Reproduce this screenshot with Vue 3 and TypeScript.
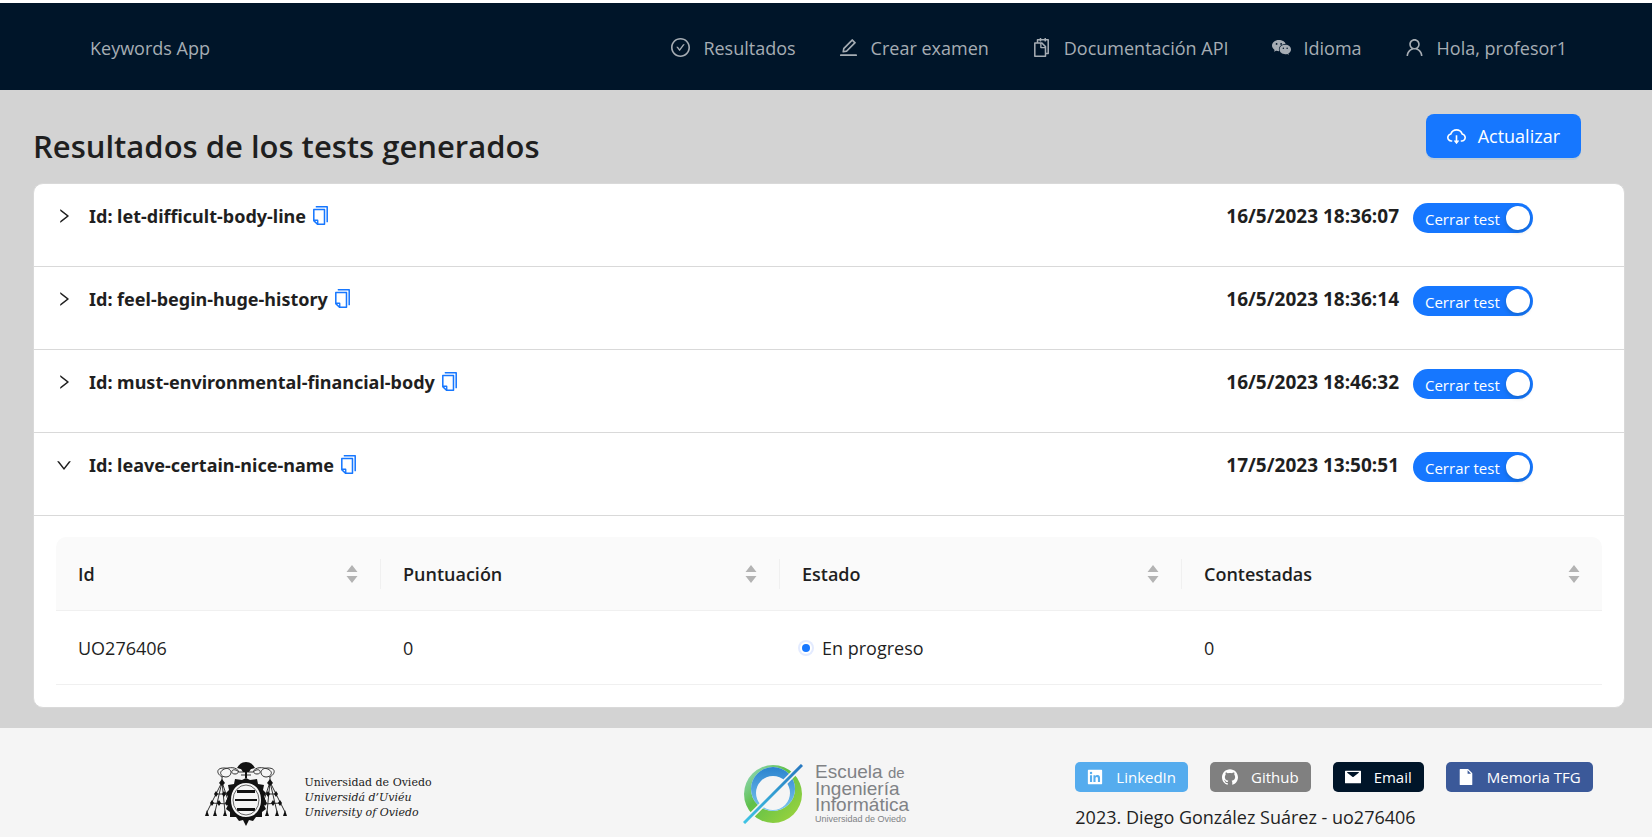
<script setup lang="ts">
import { computed, ref } from 'vue'

interface NavItem {
  label: string
  icon: string
}

interface Answer {
  id: string
  score: number
  state: string
  answered: number
}

interface Test {
  id: string
  date: string
  open: boolean
  active: boolean
}

type Key = keyof Answer

const icons: Record<string, string> = {
  check:
    'M699 353h-46.9c-10.2 0-19.9 4.9-25.9 13.3L469 584.3l-71.2-98.8c-6-8.3-15.6-13.3-25.9-13.3H325c-6.5 0-10.3 7.4-6.5 12.7l124.6 172.8a31.8 31.8 0 0051.7 0l210.6-292c3.9-5.3.1-12.7-6.4-12.7zM512 64C264.6 64 64 264.6 64 512s200.6 448 448 448 448-200.6 448-448S759.4 64 512 64zm0 820c-205.4 0-372-166.6-372-372s166.6-372 372-372 372 166.6 372 372-166.6 372-372 372z',
  edit:
    'M257.7 752c2 0 4-.2 6-.5L431.9 722c2-.4 3.9-1.3 5.3-2.8l423.9-423.9a9.96 9.96 0 000-14.1L694.9 114.9c-1.9-1.9-4.4-2.9-7.1-2.9s-5.2 1-7.1 2.9L256.8 538.8c-1.5 1.5-2.4 3.3-2.8 5.3l-29.5 168.2a33.5 33.5 0 009.4 29.8c6.6 6.4 14.9 9.9 23.8 9.9zm67.4-174.4L687.8 215l73.3 73.3-362.7 362.6-88.9 15.7 15.6-89zM880 836H144c-17.7 0-32 14.3-32 32v36c0 4.4 3.6 8 8 8h784c4.4 0 8-3.6 8-8v-36c0-17.7-14.3-32-32-32z',
  snippets:
    'M832 112H724V72c0-4.4-3.6-8-8-8h-56c-4.4 0-8 3.6-8 8v40H500V72c0-4.4-3.6-8-8-8h-56c-4.4 0-8 3.6-8 8v40H320c-17.7 0-32 14.3-32 32v120h-96c-17.7 0-32 14.3-32 32v632c0 17.7 14.3 32 32 32h512c17.7 0 32-14.3 32-32v-96h96c17.7 0 32-14.3 32-32V144c0-17.7-14.3-32-32-32zM664 888H232V336h218v174c0 22.1 17.9 40 40 40h174v338zm0-402H514V336h.2L664 485.8v.2zm128 274h-56V456L544 264H360v-80h68v32c0 4.4 3.6 8 8 8h56c4.4 0 8-3.6 8-8v-32h152v32c0 4.4 3.6 8 8 8h56c4.4 0 8-3.6 8-8v-32h68v576z',
  chat:
    'M385 160C206 160 64 278 64 423c0 79 43 150 110 198l12 9-28 84 98-50 24 6c33 9 69 14 105 14h17c-8-25-12-52-12-80 0-142 135-255 302-255h14C680 236 547 160 385 160zM280 302a42 42 0 110 84 42 42 0 010-84zM494 302a42 42 0 110 84 42 42 0 010-84zM690 385c-150 0-270 98-270 220s120 222 270 222c32 0 62-5 90-12l82 43-24-70c75-38 122-106 122-183 0-122-120-220-270-220zM600 510a36 36 0 110 72 36 36 0 010-72zM778 510a36 36 0 110 72 36 36 0 010-72z',
  user:
    'M858.5 763.6a374 374 0 00-80.6-119.5 375.63 375.63 0 00-119.5-80.6c-.4-.2-.8-.3-1.2-.5C719.5 518 760 444.7 760 362c0-137-111-248-248-248S264 225 264 362c0 82.7 40.5 156 102.8 201.1-.4.2-.8.3-1.2.5-44.8 18.9-85 46-119.5 80.6a375.63 375.63 0 00-80.6 119.5A371.7 371.7 0 00136 901.8a8 8 0 008 8.2h60c4.4 0 7.9-3.5 8-7.8 2-77.2 33-149.5 87.8-204.3 56.7-56.7 132-87.9 212.2-87.9s155.5 31.2 212.2 87.9C779 752.7 810 825 812 902.2c.1 4.4 3.6 7.8 8 7.8h60a8 8 0 008-8.2c-1-47.8-10.9-94.3-29.5-138.2zM512 534c-45.9 0-89.1-17.9-121.6-50.4S340 407.9 340 362c0-45.9 17.9-89.1 50.4-121.6S466.1 190 512 190s89.1 17.9 121.6 50.4S684 316.1 684 362c0 45.9-17.9 89.1-50.4 121.6S557.9 534 512 534z',
  cloud:
    'M624 706.3h-74.1V464c0-4.4-3.6-8-8-8h-60c-4.4 0-8 3.6-8 8v242.3H400c-6.7 0-10.4 7.7-6.3 12.9l112 141.7a8 8 0 0012.6 0l112-141.7c4.1-5.2.4-12.9-6.3-12.9zM811.4 366.7C765.6 245.9 648.9 160 512.2 160S258.8 245.8 213 366.6C127.3 389.1 64 467.2 64 560c0 110.5 89.5 200 199.9 200H304c4.4 0 8-3.6 8-8v-60c0-4.4-3.6-8-8-8h-40.1c-33.7 0-65.4-13.4-89-37.7-23.5-24.2-36-56.8-34.9-90.6.9-26.4 9.9-51.2 26.2-72.1 16.7-21.3 40.1-36.8 66.1-43.7l37.9-9.9 13.9-36.6c8.6-22.8 20.6-44.1 35.7-63.4a245.6 245.6 0 0152.4-49.9c41.1-28.9 89.5-44.2 140-44.2s98.9 15.3 140 44.2c19.9 14 37.5 30.8 52.4 49.9 15.1 19.3 27.1 40.7 35.7 63.4l13.8 36.5 37.8 10C846.1 454.5 884 503.8 884 560c0 33.1-12.9 64.3-36.3 87.7a123.07 123.07 0 01-87.6 36.3H720c-4.4 0-8 3.6-8 8v60c0 4.4 3.6 8 8 8h40.1C870.5 760 960 670.5 960 560c0-92.7-63.1-170.7-148.6-193.3z',
  right:
    'M765.7 486.8L314.9 134.7A7.97 7.97 0 00302 141v77.3c0 4.9 2.3 9.6 6.1 12.6l360 281.1-360 281.1c-3.9 3-6.1 7.7-6.1 12.6V883c0 6.7 7.7 10.4 12.9 6.3l450.8-352.1a31.96 31.96 0 000-50.4z',
  copy:
    'M832 64H296c-4.4 0-8 3.6-8 8v56c0 4.4 3.6 8 8 8h496v688c0 4.4 3.6 8 8 8h56c4.4 0 8-3.6 8-8V96c0-17.7-14.3-32-32-32zM704 192H192c-17.7 0-32 14.3-32 32v530.7c0 8.5 3.4 16.6 9.4 22.6l173.3 173.3c2.2 2.2 4.7 4 7.4 5.5v1.9h4.2c3.5 1.3 7.2 2 11 2H704c17.7 0 32-14.3 32-32V224c0-17.7-14.3-32-32-32zM350 856.2L263.9 770H350v86.2zM664 888H414V746c0-22.1-17.9-40-40-40H232V264h432v624z',
  linkedin:
    'M880 112H144c-17.7 0-32 14.3-32 32v736c0 17.7 14.3 32 32 32h736c17.7 0 32-14.3 32-32V144c0-17.7-14.3-32-32-32zM349.3 793.7H230.6V411.9h118.7v381.8zm-59.3-434a68.8 68.8 0 1168.8-68.8c-.1 38-30.9 68.8-68.8 68.8zm503.7 434H675.1V608c0-44.3-.8-101.2-61.7-101.2-61.7 0-71.2 48.2-71.2 98v188.9H423.7V411.9h113.8v52.2h1.6c15.8-30 54.5-61.7 112.3-61.7 120.2 0 142.3 79.1 142.3 181.9v209.4z',
  github:
    'M511.6 76.3C264.3 76.2 64 276.4 64 523.5 64 718.9 189.3 885 363.8 946c23.5 5.9 19.9-10.8 19.9-22.2v-77.5c-135.7 15.9-141.2-73.9-150.3-88.9C215 726 171.5 718 184.5 703c30.9-15.9 62.4 4 98.9 57.9 26.4 39.1 77.9 32.5 104 26 5.7-23.5 17.9-44.5 34.7-60.8-140.6-25.2-199.2-111-199.2-213 0-49.5 16.3-95 48.3-131.7-20.4-60.5 1.9-112.3 4.9-120 58.1-5.2 118.5 41.6 123.2 45.3 33-8.9 70.7-13.6 112.9-13.6 42.4 0 80.2 4.9 113.5 13.9 11.3-8.6 67.3-48.8 121.3-43.9 2.9 7.7 24.7 58.3 5.5 118 32.4 36.8 48.9 82.7 48.9 132.3 0 102.2-59 188.1-200 212.9a127.5 127.5 0 0138.1 91v112.5c.8 9 0 17.9 15 17.9 177.1-59.7 304.6-227 304.6-424.1 0-247.2-200.4-447.3-447.5-447.3z',
  mail:
    'M928 160H96c-17.7 0-32 14.3-32 32v640c0 17.7 14.3 32 32 32h832c17.7 0 32-14.3 32-32V192c0-17.7-14.3-32-32-32zM836 270L531 507c-11 9-27 9-38 0L188 270v-40h648z',
  file:
    'M854.6 288.7c6 6 9.4 14.1 9.4 22.6V928c0 17.7-14.3 32-32 32H192c-17.7 0-32-14.3-32-32V96c0-17.7 14.3-32 32-32h424.7c8.5 0 16.7 3.4 22.7 9.4l215.2 215.3zM790.2 326L602 137.8V326h188.2z',
}

const navItems: NavItem[] = [
  { label: 'Resultados', icon: 'check' },
  { label: 'Crear examen', icon: 'edit' },
  { label: 'Documentación API', icon: 'snippets' },
  { label: 'Idioma', icon: 'chat' },
  { label: 'Hola, profesor1', icon: 'user' },
]

const tests = ref<Test[]>([
  { id: 'let-difficult-body-line', date: '16/5/2023 18:36:07', open: false, active: true },
  { id: 'feel-begin-huge-history', date: '16/5/2023 18:36:14', open: false, active: true },
  { id: 'must-environmental-financial-body', date: '16/5/2023 18:46:32', open: false, active: true },
  { id: 'leave-certain-nice-name', date: '17/5/2023 13:50:51', open: true, active: true },
])

const columns: { key: Key; label: string }[] = [
  { key: 'id', label: 'Id' },
  { key: 'score', label: 'Puntuación' },
  { key: 'state', label: 'Estado' },
  { key: 'answered', label: 'Contestadas' },
]

const answers = ref<Answer[]>([{ id: 'UO276406', score: 0, state: 'En progreso', answered: 0 }])
const sortKey = ref<Key | null>(null)

const sortedAnswers = computed(() => {
  const key = sortKey.value
  if (!key) return answers.value
  return [...answers.value].sort((a, b) => (a[key] > b[key] ? 1 : a[key] < b[key] ? -1 : 0))
})

const links = [
  { label: 'LinkedIn', icon: 'linkedin', tone: 'sky' },
  { label: 'Github', icon: 'github', tone: 'grey' },
  { label: 'Email', icon: 'mail', tone: 'navy' },
  { label: 'Memoria TFG', icon: 'file', tone: 'indigo' },
]

function copyId(id: string): void {
  navigator.clipboard?.writeText(id)
}
</script>

<template>
  <div class="page">
    <header class="topbar">
      <a class="brand" href="#">Keywords App</a>
      <nav class="nav">
        <a v-for="item in navItems" :key="item.label" class="nav-item" href="#">
          <svg class="icon" viewBox="64 64 896 896" aria-hidden="true">
            <path :d="icons[item.icon]" fill-rule="evenodd" />
          </svg>
          <span>{{ item.label }}</span>
        </a>
      </nav>
    </header>

    <main class="content">
      <div class="heading">
        <h1>Resultados de los tests generados</h1>
        <button class="refresh" type="button">
          <svg class="icon" viewBox="64 64 896 896" aria-hidden="true"><path :d="icons.cloud" /></svg>
          <span>Actualizar</span>
        </button>
      </div>

      <div class="panel">
        <section v-for="test in tests" :key="test.id" class="test">
          <div class="test-head">
            <button class="toggle" type="button" :aria-expanded="test.open" @click="test.open = !test.open">
              <svg class="chevron" :class="{ down: test.open }" viewBox="64 64 896 896" aria-hidden="true">
                <path :d="icons.right" />
              </svg>
              <span>Id: {{ test.id }}</span>
            </button>
            <button class="copy" type="button" aria-label="Copiar" @click="copyId(test.id)">
              <svg class="icon" viewBox="64 64 896 896" aria-hidden="true"><path :d="icons.copy" /></svg>
            </button>
            <span class="date">{{ test.date }}</span>
            <label class="switch" :class="{ off: !test.active }">
              <input v-model="test.active" type="checkbox" role="switch" />
              <span class="switch-text">Cerrar test</span>
              <span class="knob"></span>
            </label>
          </div>
          <div v-if="test.open" class="test-body">
            <table>
              <colgroup>
                <col class="c1" />
                <col class="c2" />
                <col class="c3" />
                <col class="c4" />
              </colgroup>
              <thead>
                <tr>
                  <th v-for="col in columns" :key="col.key" scope="col">
                    <button class="sort" type="button" @click="sortKey = col.key">
                      <span>{{ col.label }}</span>
                      <svg class="carets" viewBox="0 0 12 18" aria-hidden="true">
                        <path d="M6 0L11.500 7H.5zM6 18L.5 11h11z" />
                      </svg>
                    </button>
                  </th>
                </tr>
              </thead>
              <tbody>
                <tr v-for="row in sortedAnswers" :key="row.id">
                  <td>{{ row.id }}</td>
                  <td>{{ row.score }}</td>
                  <td>
                    <span class="status"><i class="dot"></i>{{ row.state }}</span>
                  </td>
                  <td>{{ row.answered }}</td>
                </tr>
              </tbody>
            </table>
          </div>
        </section>
      </div>
    </main>

    <footer class="footer">
      <div class="uni">
        <svg class="crest" viewBox="0 0 84 64" aria-hidden="true">
          <g fill="none" stroke="#333" stroke-width="1">
            <path d="M35 10C28 4 25 12 31 12S35 4 24 6s-8 9-2 9 8-9-2-9-6 8-1 9M49 10c7-6 10 2 4 2s-4-8 7-6 8 9 2 9-8-9 2-9 6 8 1 9" />
            <path d="M18 15v5L3 50M18 20l-7 30M18 20l3 30M18 20l10 30M12 32h12M7 41l17 1M66 15v5l15 30M66 20l7 30M66 20l-3 30M66 20L56 50M72 32H60M77 41l-17 1" />
            <path d="M35 10h14M37 13h10" />
          </g>
          <g fill="#111">
            <path d="M33 6Q36 0 42 0t9 6q-9 3-18 0zM37 7h10l-2 3h-6zM41 10h2v6h-2z" />
            <path
              d="M18 17l3 4-3 3-3-3zM66 17l3 4-3 3-3-3zM12 29l2 3-2 3-2-3zM72 29l2 3-2 3-2-3zM20 29l2 3-2 3-2-3zM64 29l2 3-2 3-2-3zM8 38l2 3-2 3-2-3zM15 38l2 3-2 3-2-3zM23 38l2 3-2 3-2-3zM76 38l2 3-2 3-2-3zM69 38l2 3-2 3-2-3zM61 38l2 3-2 3-2-3z"
            />
            <path
              d="M3 48l2 6H1zM11 48l2 6H9zM21 48l2 6h-4zM28 48l2 6h-4zM56 48l2 6h-4zM63 48l2 6h-4zM73 48l2 6h-4zM81 48l2 6h-4z"
            />
            <path
              fill-rule="evenodd"
              d="M42 16l4 2 7-1 1 5 6 1-1 5 3 3-2 4 2 4-2 4 2 4-4 3v5l-6 0-3 4-4-1-3 6-3-6-4 1-3-4-6 0v-5l-4-3 2-4-2-4 2-4-2-4 3-3-1-5 6-1 1-5 7 1zM42 21c-9 0-15 7-15 17s6 17 15 17 15-7 15-17-6-17-15-17z"
            />
            <path d="M33 28h18v3H33zM31 37h22v2H31zM33 46h18v3H33z" />
          </g>
          <ellipse cx="42" cy="38" rx="13" ry="15" fill="none" stroke="#666" />
        </svg>
        <div class="uni-text">
          <span>Universidad de Oviedo</span>
          <em>Universidá d’Uviéu</em>
          <em>University of Oviedo</em>
        </div>
      </div>

      <div class="school">
        <svg class="ring" viewBox="0 0 60 60" aria-hidden="true">
          <defs>
            <linearGradient id="ring-green" x1="0" y1="0" x2="1" y2="1">
              <stop offset="0" stop-color="#9adcd0" />
              <stop offset=".4" stop-color="#5fc04a" />
              <stop offset="1" stop-color="#a5d63a" />
            </linearGradient>
            <linearGradient id="ring-blue" x1="0" y1="0" x2="0" y2="1">
              <stop offset="0" stop-color="#2a83cf" />
              <stop offset="1" stop-color="#7cc6ee" />
            </linearGradient>
            <linearGradient id="ring-line" x1="1" y1="0" x2="0" y2="1">
              <stop offset="0" stop-color="#2878c0" />
              <stop offset="1" stop-color="#3fc4e4" />
            </linearGradient>
          </defs>
          <path
            fill="url(#ring-green)"
            fill-rule="evenodd"
            d="M30 1a29 29 0 100 58 29 29 0 000-58zM30 3a22 22 0 110 44 22 22 0 010-44z"
          />
          <path
            fill="url(#ring-blue)"
            fill-rule="evenodd"
            d="M30 3a22 22 0 110 44 22 22 0 010-44zM30 12a17 17 0 100 34 17 17 0 000-34z"
          />
          <path d="M1 59L59 1" stroke="#f5f5f5" stroke-width="6" />
          <path d="M1 59L59 1" stroke="url(#ring-line)" stroke-width="3" />
        </svg>
        <div class="school-text">
          <span>Escuela <small>de</small></span>
          <span>Ingeniería</span>
          <span>Informática</span>
          <span class="tiny">Universidad de Oviedo</span>
        </div>
      </div>

      <div class="contact">
        <div class="tags">
          <a v-for="link in links" :key="link.label" class="tag" :class="link.tone" href="#">
            <svg viewBox="64 64 896 896" aria-hidden="true">
              <path :d="icons[link.icon]" fill-rule="evenodd" />
            </svg>
            <span>{{ link.label }}</span>
          </a>
        </div>
        <p>2023. Diego González Suárez - uo276406</p>
      </div>
    </footer>
  </div>
</template>

<style>
body {
  margin: 0;
  background: #fff;
}
</style>

<style scoped>
.page {
  box-sizing: border-box;
  min-height: 100vh;
  padding-top: 3px;
  display: flex;
  flex-direction: column;
  font-family: 'Segoe UI', 'Open Sans', 'Noto Sans', sans-serif;
  font-size: 18px;
  line-height: 28px;
  color: #1f1f1f;
}

button {
  font: inherit;
  color: inherit;
  border: 0;
  padding: 0;
  background: none;
  cursor: pointer;
}

svg {
  display: block;
  flex: none;
  fill: currentColor;
}

a {
  color: inherit;
  text-decoration: none;
}

.icon {
  width: 19px;
  height: 19px;
}

.topbar {
  display: flex;
  align-items: center;
  justify-content: space-between;
  height: 85px;
  padding: 2px 85px 0 90px;
  background: #001529;
  color: #a6adb4;
}

.nav {
  display: flex;
  gap: 43px;
}

.nav-item {
  display: flex;
  align-items: center;
  gap: 13px;
}

.content {
  padding: 24px 27px 20px 33px;
  background: #d3d3d3;
}

.heading {
  display: flex;
  align-items: flex-start;
  justify-content: space-between;
  padding-right: 44px;
}

h1 {
  margin: 10px 0 15px;
  font-size: 31px;
  line-height: 44px;
  font-weight: 600;
}

.refresh {
  display: flex;
  align-items: center;
  gap: 12px;
  height: 44px;
  padding: 0 21px;
  border-radius: 8px;
  background: #1677ff;
  color: #fff;
  box-shadow: 0 2px 0 rgba(5, 145, 255, 0.1);
}

.panel {
  border: 1px solid #d9d9d9;
  border-radius: 10px;
  background: #fff;
  overflow: hidden;
}

.test + .test {
  border-top: 1px solid #d9d9d9;
}

.test-head {
  display: flex;
  align-items: flex-start;
  height: 50px;
  padding: 16px 91px 16px 22px;
  font-weight: 700;
}

.toggle {
  display: flex;
  align-items: center;
  gap: 17px;
  height: 32px;
  font-family: 'Segoe UI', 'Noto Sans', sans-serif;
}

.chevron {
  width: 16px;
  height: 16px;
}

.chevron.down {
  transform: rotate(90deg);
}

.copy {
  margin: 6px auto 0 5px;
  color: #1677ff;
}

.date {
  font-size: 19px;
  line-height: 32px;
  margin-right: 14px;
}

.switch {
  display: flex;
  align-items: center;
  gap: 5px;
  box-sizing: border-box;
  width: 120px;
  height: 30px;
  margin-top: 3px;
  padding: 0 3px 0 12px;
  border-radius: 15px;
  background: #1677ff;
  color: #fff;
  font-size: 15px;
  font-weight: 400;
  cursor: pointer;
}

.switch.off {
  background: #bfbfbf;
}

.switch input {
  appearance: none;
  width: 0;
  height: 0;
  margin: 0 -5px 0 0;
}

.switch-text {
  flex: 1;
  white-space: nowrap;
  padding-top: 2px;
}

.knob {
  width: 24px;
  height: 24px;
  border-radius: 50%;
  background: #fff;
  box-shadow: 0 2px 4px rgba(0, 35, 11, 0.2);
}

.test-body {
  padding: 21px 22px 22px;
  border-top: 1px solid #d9d9d9;
}

table {
  width: 100%;
  table-layout: fixed;
  border-collapse: separate;
  border-spacing: 0;
}

.c1 {
  width: 325px;
}

.c2 {
  width: 399px;
}

.c3 {
  width: 402px;
}

.c4 {
  width: 420px;
}

th,
td {
  box-sizing: border-box;
  height: 74px;
  padding: 0;
  border-bottom: 1px solid #f0f0f0;
  text-align: left;
}

td {
  padding: 0 22px;
}

th {
  background: #fafafa;
  font-weight: 600;
}

th:first-child {
  border-top-left-radius: 10px;
}

th:last-child {
  border-top-right-radius: 10px;
}

.sort {
  display: flex;
  box-sizing: border-box;
  align-items: center;
  justify-content: space-between;
  width: 100%;
  height: 30px;
  padding: 0 22px;
  border-right: 1px solid #f0f0f0;
}

th:last-child .sort {
  border-right: 0;
}

.carets {
  width: 12px;
  height: 18px;
  color: #b3b3b3;
}

.status {
  display: flex;
  align-items: center;
  gap: 12px;
}

.dot {
  width: 8px;
  height: 8px;
  border-radius: 50%;
  background: #1677ff;
  box-shadow: 0 0 0 2px #fff, 0 0 0 4px #e3ebff;
}

.footer {
  flex: 1;
  display: grid;
  grid-template-columns: repeat(3, minmax(0, 1fr));
  align-items: start;
  justify-items: center;
  padding: 34px 64px 0;
  background: #f5f5f5;
}

.uni {
  display: flex;
  align-items: center;
  gap: 16px;
}

.crest {
  width: 84px;
  height: 64px;
}

.uni-text {
  display: flex;
  flex-direction: column;
  padding-top: 6px;
  font-family: 'DejaVu Serif', serif;
  font-size: 11px;
  line-height: 15px;
  color: #222;
}

.school {
  display: flex;
  gap: 12px;
}

.ring {
  width: 60px;
  height: 60px;
  margin-top: 2px;
}

.school-text {
  display: flex;
  flex-direction: column;
  font-family: 'Liberation Sans', Arial, sans-serif;
  font-size: 19px;
  line-height: 16px;
  padding-top: 2px;
  color: #808285;
}

.school-text small {
  font-size: 15px;
}

.school-text .tiny {
  font-size: 9px;
  line-height: 12px;
}

.contact {
  display: flex;
  flex-direction: column;
  width: max-content;
}

.tags {
  display: flex;
  gap: 22px;
}

.tag {
  display: flex;
  align-items: center;
  gap: 13px;
  height: 30px;
  padding: 0 12px;
  border-radius: 5px;
  color: #fff;
  font-size: 15px;
}

.tag svg {
  width: 16px;
  height: 16px;
}

.sky {
  background: #55acee;
}

.grey {
  background: #808080;
}

.navy {
  background: #001529;
}

.indigo {
  background: #3b5999;
}

.contact p {
  margin: 11px 0 0;
}
</style>
